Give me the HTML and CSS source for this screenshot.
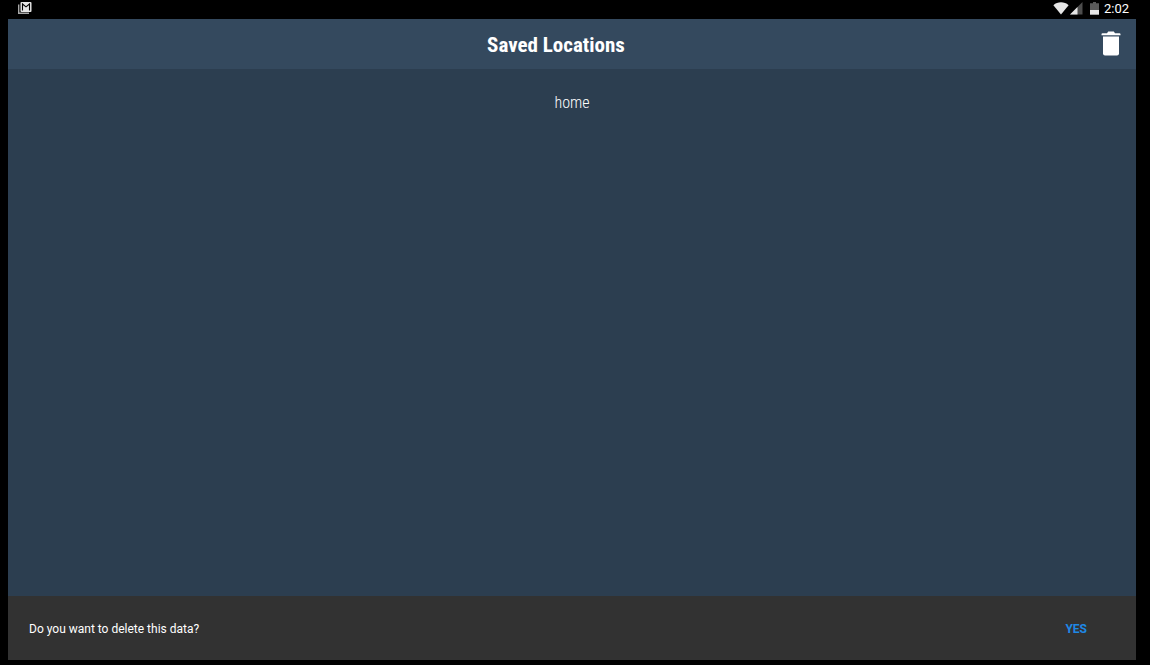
FILE: index.html
```html
<!DOCTYPE html>
<html lang="en">
<head>
<meta charset="utf-8">
<title>Saved Locations</title>
<link rel="stylesheet" href="styles.css">
</head>
<body>
<div class="status-bar">
  <svg class="status-mail" width="14" height="12" viewBox="0 0 14 12" aria-hidden="true">
    <path d="M.7 2.500v8.800H11" fill="none" stroke="#a8a8a8" stroke-width="1.400"/>
    <rect x="2.500" y="0" width="11" height="10" rx="1" fill="#e6e6e6"/>
    <path d="M4.500 8.500V2L8 4.900 11.500 2v6.500" fill="none" stroke="#000" stroke-width="1.100"/>
  </svg>
  <div class="status-right">
    <svg width="16" height="13" viewBox="0 0 16 13" aria-hidden="true">
      <path d="M.4 3.200C4.500-.6 11.500-.6 15.600 3.200L8 12.600z" fill="#e6e6e6"/>
    </svg>
    <svg width="13" height="13" viewBox="0 0 13 13" aria-hidden="true">
      <path d="M12.500 0v12.500H0z" fill="#4d4d4d"/>
      <path d="M7.500 5v7.500H0z" fill="#e6e6e6"/>
    </svg>
    <svg class="battery" width="9" height="13" viewBox="0 0 9 13" aria-hidden="true">
      <path d="M3 0h3v1.300h3V8H0V1.300h3z" fill="#5a5a5a"/>
      <path d="M0 8h9v4.700H0z" fill="#e6e6e6"/>
    </svg>
    <time class="clock">2:02</time>
  </div>
</div>
<header class="toolbar">
  <h1 class="title">Saved Locations</h1>
  <button class="delete" type="button" aria-label="Delete">
    <svg width="22" height="26" viewBox="0 0 22 26" aria-hidden="true">
      <path d="M1.500 4.300V3.200q0-1 1-1H7L8.200.6h5.600L15 2.200h4.500q1 0 1 1v1.100z" fill="#fff"/>
      <path d="M3 5.500h16V22.500q0 2-2 2H5q-2 0-2-2z" fill="#fff"/>
    </svg>
  </button>
</header>
<main class="content">
  <ul class="locations">
    <li class="location">home</li>
  </ul>
</main>
<div class="snackbar" role="alert">
  <span>Do you want to delete this data?</span>
  <button class="confirm" type="button">YES</button>
</div>
</body>
</html>
```
FILE: styles.css
```css
* {
  box-sizing: border-box;
}

body {
  display: flex;
  flex-direction: column;
  min-height: 100vh;
  margin: 0;
  padding: 0 14px 5px 8px;
  background: #000;
  color: #fff;
  font-family: Roboto, "Liberation Sans", sans-serif;
}

button {
  border: 0;
  padding: 0;
  background: none;
  font: inherit;
  cursor: pointer;
}

svg {
  display: block;
}

.status-bar {
  display: flex;
  align-items: center;
  justify-content: space-between;
  height: 19px;
  padding: 0 7px 3px 10px;
}

.status-right {
  display: flex;
  align-items: center;
  gap: 1px;
}

.battery {
  margin-left: 6px;
}

.clock {
  margin-left: 4px;
  color: #fff;
  font-size: 13px;
  line-height: 17px;
}

.toolbar {
  display: flex;
  align-items: center;
  height: 50px;
  padding: 0 14px 0 4px;
  background: #34495e;
}

.title {
  flex: 1;
  margin: 0;
  padding-top: 2px;
  font-family: "Roboto Condensed", Roboto, sans-serif;
  font-size: 21px;
  font-weight: 700;
  line-height: 28px;
  text-align: center;
}

.content {
  flex: 1;
  padding-top: 20px;
  background: #2c3e50;
}

.locations {
  margin: 0;
  padding: 0;
  list-style: none;
}

.location {
  color: #fff;
  font-family: "Roboto Condensed", Roboto, sans-serif;
  font-size: 16px;
  font-weight: 300;
  line-height: 28px;
  text-align: center;
}

.snackbar {
  display: flex;
  align-items: center;
  justify-content: space-between;
  height: 64px;
  padding: 2px 49px 0 21px;
  background: #323232;
  font-size: 12px;
}

.confirm {
  color: #1e88e5;
  font-weight: 700;
}
```
